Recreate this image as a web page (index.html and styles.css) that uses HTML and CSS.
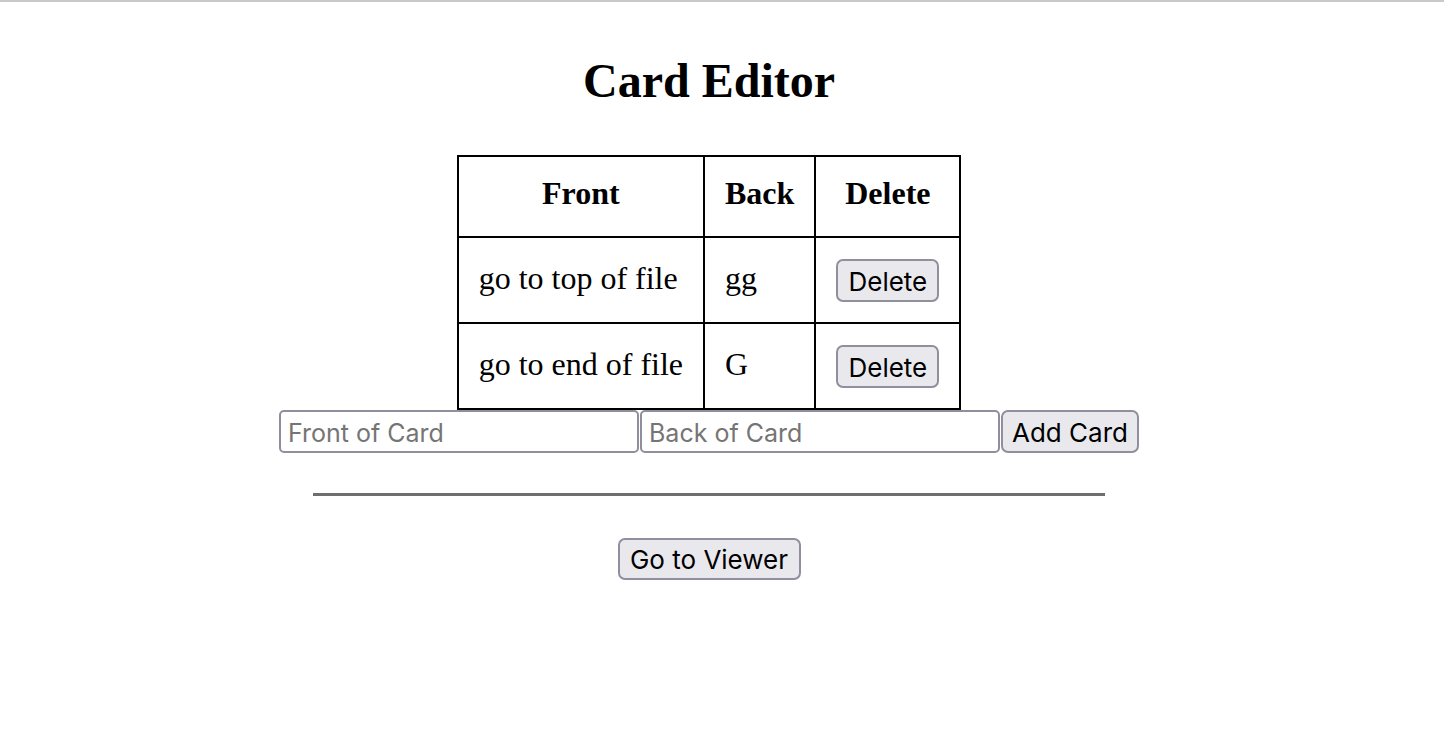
FILE: index.html
```html
<!DOCTYPE html>
<html lang="en">
<head>
<meta charset="utf-8">
<title>Card Editor</title>
<link rel="stylesheet" href="styles.css">
</head>
<body>
<div class="page">
  <h1 class="title">Card Editor</h1>
  <table class="cards">
    <thead>
      <tr><th>Front</th><th>Back</th><th>Delete</th></tr>
    </thead>
    <tbody>
      <tr><td class="txt">go to top of file</td><td class="txt">gg</td><td class="act"><button class="btn">Delete</button></td></tr>
      <tr><td class="txt">go to end of file</td><td class="txt">G</td><td class="act"><button class="btn">Delete</button></td></tr>
    </tbody>
  </table>
  <div class="add-row">
    <input class="field" type="text" placeholder="Front of Card">
    <input class="field" type="text" placeholder="Back of Card">
    <button class="btn btn-add">Add Card</button>
  </div>
  <hr class="rule">
  <div class="nav-row">
    <button class="btn btn-nav">Go to Viewer</button>
  </div>
</div>
</body>
</html>
```

FILE: styles.css
```css
html, body {
  margin: 0;
  padding: 0;
  background: #ffffff;
}
body {
  border-top: 2px solid #c9c9c9;
  font-family: "Liberation Serif", "Times New Roman", serif;
  font-size: 32px;
  color: #000;
}
.page {
  width: 1418px;
}
.title {
  margin: 51px 0 47px;
  font-size: 48px;
  font-weight: bold;
  text-align: center;
  line-height: normal;
}
.cards {
  margin: 0 auto;
  border-collapse: collapse;
  border: 2px solid #000;
}
.cards th,
.cards td {
  border: 2px solid #000;
  vertical-align: middle;
  white-space: nowrap;
}
.cards th {
  padding: 18px 20px 24px;
  font-weight: bold;
  text-align: center;
}
.cards td.txt {
  padding: 18px 20px 22px;
  text-align: left;
}
.cards td.act {
  padding: 21px 20px 20px;
}
.btn {
  font-family: Inter, "Liberation Sans", Arial, sans-serif;
  font-size: 26px;
  color: #000;
  background: #e9e9ed;
  border: 2px solid #8f8f9d;
  border-radius: 7px;
  height: 43px;
  padding: 2px 0 0;
  line-height: 1;
  box-sizing: border-box;
  vertical-align: middle;
}
.cards td .btn {
  display: block;
  width: 103px;
}
.add-row {
  display: flex;
  justify-content: center;
  gap: 1px;
  margin-top: 0;
}
.field {
  width: 360px;
  height: 43px;
  box-sizing: border-box;
  border: 2px solid #8f8f9d;
  border-radius: 5px;
  padding: 2px 7px 0;
  font-family: Inter, "Liberation Sans", Arial, sans-serif;
  font-size: 25px;
  color: #000;
  background: #fff;
  margin: 0;
}
.field::placeholder {
  color: #757575;
  opacity: 1;
}
.btn-add {
  width: 138px;
}
.rule {
  width: 792px;
  margin: 40px auto 0;
  height: 0;
  border: 0;
  border-top: 3px solid #6e6e6e;
}
.nav-row {
  display: flex;
  justify-content: center;
  margin-top: 42px;
}
.btn-nav {
  width: 183px;
  height: 42px;
}
```
